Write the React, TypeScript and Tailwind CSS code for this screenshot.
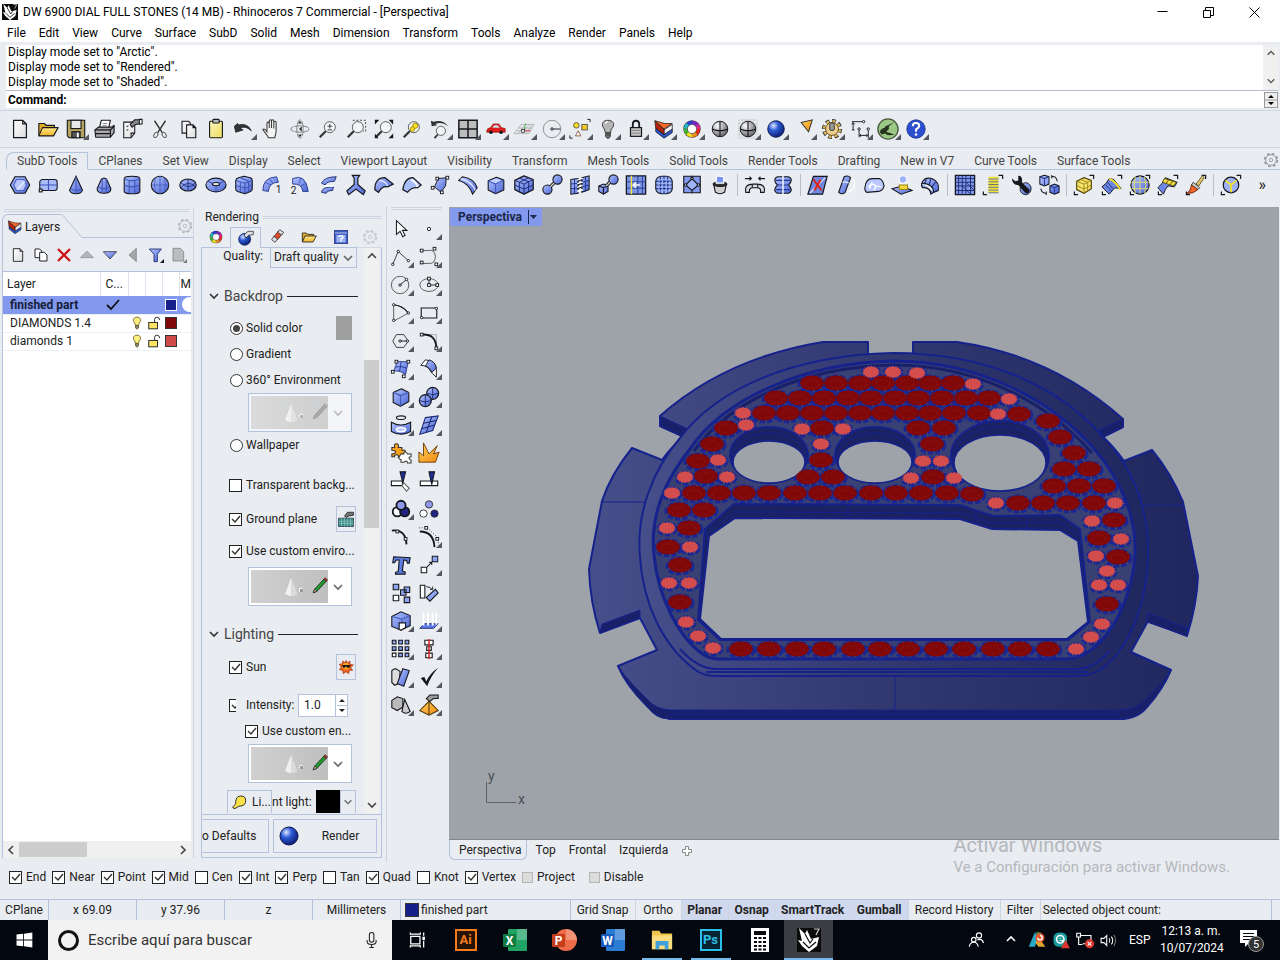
import { useState } from "react";
import type { ReactNode } from "react";
import { clsx } from "clsx";

/* ---------- icon artwork, all on a 24x24 grid ---------- */

const INK = "#15171c";
const B = "url(#blue)";

function Grip({ x, y }: { x: number; y: number }) {
  return <rect x={x - 1.5} y={y - 1.5} width="3" height="3" fill="#fff" stroke={INK} />;
}

function Dot({ x, y }: { x: number; y: number }) {
  return <circle cx={x} cy={y} r="1.3" fill="#fff" stroke={INK} />;
}

function Wheel() {
  const colors = ["#e8261c", "#f08c1a", "#f2e31f", "#3fb52c", "#22b8c9", "#2a3fd6", "#7a25c9", "#e0249a"];
  return (
    <g>
      <circle cx="12" cy="12" r="9.5" fill="#444" />
      {colors.map((c, i) => (
        <circle key={c} cx="12" cy="12" r="7" fill="none" stroke={c} strokeWidth="4" pathLength="16" strokeDasharray="2 14" strokeDashoffset={-i * 2} />
      ))}
      <circle cx="12" cy="12" r="5" fill="#fff" stroke="#444" strokeWidth="0.7" />
    </g>
  );
}

const corners = <path d="M18 1.5h4.500v4M1.500 19v3.500h4" fill="none" stroke={INK} strokeWidth="1.300" />;
const sphere = (
  <g fill="url(#steel)" stroke={INK}>
    <circle cx="12" cy="12" r="8.500" />
    <path d="M12 3.500v17M3.500 12q8.500 4 17 0" fill="none" strokeWidth="1.200" />
  </g>
);
const magnifier = (
  <g fill="none" stroke="#333">
    <circle cx="14" cy="10" r="6" fill="#f3f5f8" stroke="#555" />
    <path d="M9.500 14.500L3 21" strokeWidth="2.400" />
  </g>
);

const ICONS: Record<string, ReactNode> = {
  new: <path d="M5 2.500h10l4 4v15H5zM15 2.500v4h4" fill="url(#paper)" stroke={INK} strokeWidth="1.300" />,
  open: (
    <g stroke={INK} strokeWidth="1.200" strokeLinejoin="round">
      <path d="M2 19V6h6l2 2h9v3" fill="#e0a92c" />
      <path d="M2 19.500l4-9h17l-5 9z" fill="url(#gold)" />
    </g>
  ),
  save: (
    <g stroke={INK} strokeWidth="1.200">
      <path d="M2.500 2.500h19v19h-17l-2-2z" fill="#b3a45e" />
      <rect x="6.500" y="2.500" width="11" height="9" fill="#e9e9e9" />
      <rect x="7.500" y="15" width="9" height="6.500" fill="#555" />
      <path d="M14 16v5" stroke="#fff" strokeWidth="2" />
    </g>
  ),
  print: (
    <g stroke={INK} strokeWidth="1.200" strokeLinejoin="round">
      <path d="M7 11l2-8.500h10l-2 8.500z" fill="#fff" />
      <path d="M2 13l4-3h14l3-2v8l-4 5H3z" fill="#a9a9a9" />
      <path d="M2 13h17l4-4M3 17h16M19 13v8" fill="none" />
      <path d="M10.500 6h5M10 8.500h5" stroke="#888" />
    </g>
  ),
  props: (
    <g stroke={INK} strokeWidth="1.100">
      <path d="M3 4.500h12v12l-4 5H3z" fill="url(#paper)" />
      <path d="M15 16.500h-4v5M6 9h2M6 13h2" fill="none" />
      <path d="M10 7l5-5h7v4l-6 1-4 3z" fill="#888" />
      <path d="M20 1.500v5h3v-5z" fill="#fff" />
    </g>
  ),
  cut: (
    <g fill="none" stroke="#333">
      <path d="M6 3l8.500 13M18 3L9.500 16" strokeWidth="1.500" />
      <ellipse cx="7.500" cy="18.500" rx="2" ry="3" transform="rotate(30 7.500 18.500)" stroke="#555" />
      <ellipse cx="16.500" cy="18.500" rx="2" ry="3" transform="rotate(-30 16.500 18.500)" stroke="#555" />
    </g>
  ),
  copy: (
    <g fill="url(#paper)" stroke={INK} strokeWidth="1.200">
      <path d="M5.500 3.500h7l2 2v11h-9z" />
      <path d="M10.500 7.500h7l3 3v11h-10zM17.500 7.500v3h3" />
    </g>
  ),
  paste: (
    <g stroke={INK} strokeWidth="1.200">
      <rect x="5" y="3.500" width="14" height="18" rx="1" fill="url(#yellow)" />
      <rect x="8.500" y="1.500" width="7" height="4" rx="1" fill="#bbb" />
    </g>
  ),
  undo: <path d="M1.500 9l1.500 6.500 8-2.500-3-1.500q5-4 12 2.500-4-9-14-6.500l-1-1.500z" fill="#333" stroke={INK} strokeWidth="0.800" />,
  pan: (
    <path
      d="M8 21.500c-1-4-5-6-6-9 1.500-1.500 3 .5 4.500 2.500V6c0-2 2.500-2 2.500 0v5V3.500c0-2 2.500-2 2.500 0V11 3.500c0-2 2.500-2 2.500 0V11.500 5c0-2 2.500-2 2.500 0v9c0 3-1 5-1.500 7.500z"
      fill="#f4f4f4"
      stroke="#333"
      strokeWidth="1.100"
    />
  ),
  rotate: (
    <g fill="none" stroke="#777">
      <ellipse cx="12" cy="12" rx="10" ry="3.500" strokeDasharray="8 1" />
      <ellipse cx="12" cy="12" rx="3.500" ry="10" strokeDasharray="8 1" />
      <path d="M14 9l-3 3 3 3zM10 6l2-3 2 3zM10 18l2 3 2-3z" fill="#333" stroke="none" />
    </g>
  ),
  zoom: <g>{magnifier}<path d="M11.500 9h5M14 6.500v5M11.500 13h5" stroke="#333" /></g>,
  zoomWin: <g>{magnifier}<path d="M8.500 2.500h14v12h-3" fill="none" stroke="#333" strokeDasharray="2 2" /></g>,
  zoomExt: (
    <g>
      {magnifier}
      <path d="M2 7V2h5zM17 2h5v5zM22 17v5h-5zM2 17v5h4z" fill={INK} />
    </g>
  ),
  zoomSel: (
    <g>
      {magnifier}
      <circle cx="12.500" cy="12" r="2.500" fill="#f6dc22" stroke="#a88d00" />
      <circle cx="15.500" cy="8.500" r="2.800" fill="#f6dc22" stroke="#a88d00" />
    </g>
  ),
  undoView: (
    <g>
      <circle cx="13" cy="14" r="5" fill="#f3f5f8" stroke="#555" />
      <path d="M9.500 18L6 22" stroke="#333" strokeWidth="2" />
      <path d="M2 3l1 6 6-1-2-1.500q7-3 14 2.500Q15 1 5 4z" fill="#333" />
    </g>
  ),
  fourView: <path d="M2 2.500h20v19H2zM12 2.500v19M2 12h20" fill="#bdbdbd" stroke={INK} strokeWidth="1.600" />,
  car: (
    <g>
      <path d="M2 14q0-3 4-3.500l3-4h6l3 4 4 1v4H2z" fill="#df1f1b" stroke="#8b0d0a" strokeWidth="0.700" />
      <path d="M8 10.500l2-2.500h4l2 2.500z" fill="#cfe2ea" />
      <circle cx="6.500" cy="15.500" r="2" fill={INK} />
      <circle cx="17.500" cy="15.500" r="2" fill={INK} />
    </g>
  ),
  cplane: (
    <g fill="none" stroke="#a5a5a5" strokeWidth="0.800">
      <path d="M1 17l8-10h14l-6 10zM4 14h15M6.500 11h14M5.500 17l8-10M10 17l8-10M14 17l7-10" />
      <path d="M10 14h9" stroke="#c22" />
      <path d="M12 13l2-7" stroke="#2a2" />
      <Grip x={11} y={14} />
    </g>
  ),
  circle: (
    <g>
      <circle cx="12" cy="12" r="9.500" fill="none" stroke="#8b8b8b" />
      <path d="M12 12h9" stroke={INK} />
      <Dot x={12} y={12} />
    </g>
  ),
  selObj: (
    <g strokeWidth="1">
      <path d="M20 1.500h3v3M1 19v3h3" fill="none" stroke={INK} />
      <circle cx="8" cy="8" r="3" fill="#f6dc22" stroke="#555" />
      <rect x="14" y="7" width="6" height="6" fill="#f6c922" stroke="#555" />
      <path d="M10 14l3 5.500H7z" fill="#fff" stroke="#8a5a3a" />
    </g>
  ),
  bulb: (
    <g stroke="#333">
      <path d="M9 16q0-3-2-5.500C4 6 7 2.500 12 2.500s8 3.500 5 8c-2 2.500-2 2.500-2 5.500z" fill="#b5b5b5" />
      <path d="M9.500 16.500h5v4l-1.500 1.500h-2l-1.500-1.500zM9.500 18.500h5" fill="#777" />
      <path d="M9 6q1-2 3-2" fill="none" stroke="#fff" strokeWidth="1.500" />
    </g>
  ),
  lock: (
    <g stroke={INK}>
      <path d="M8.500 11V7q0-4 3.500-4t3.500 4v4" fill="none" strokeWidth="2" />
      <rect x="6" y="10.500" width="12" height="9.500" fill="#c9c9c9" strokeWidth="1.300" />
      <path d="M7 13.500h10M7 16.500h10" stroke="#777" />
    </g>
  ),
  layers: (
    <g stroke={INK} strokeWidth="0.800" strokeLinejoin="round">
      <path d="M3 11l9 7 9-6v4l-9 6-9-7z" fill="#2c55cc" />
      <path d="M12 13l9-6v5l-9 6z" fill="#f4f4f4" />
      <path d="M2 3l10 9v6L3 11z" fill="#b8230e" />
      <path d="M2 3l11 3h8l-9 6z" fill="#fa6a2c" />
    </g>
  ),
  wheel: <Wheel />,
  shaded: sphere,
  shadedGrid: (
    <g>
      <path d="M2 2h20v20H2zM2 6h20M2 10h20M2 14h20M2 18h20M6 2v20M10 2v20M14 2v20M18 2v20" fill="none" stroke="#aaa" strokeWidth="0.800" strokeDasharray="1 1" />
      {sphere}
    </g>
  ),
  rendered: <circle cx="12" cy="12" r="9" fill="url(#ball)" stroke="#0a164f" />,
  cone: <path d="M9 5l12-3-4 13z" fill="url(#orange)" stroke="#333" strokeWidth="1.100" />,
  gear: (
    <g>
      <circle cx="12" cy="12" r="8.500" fill="none" stroke="#333" strokeWidth="5" pathLength="32" strokeDasharray="2.400 1.600" />
      <circle cx="12" cy="12" r="8" fill="none" stroke="#d8b45b" strokeWidth="4" pathLength="32" strokeDasharray="1.800 2.200" strokeDashoffset="-0.300" />
      <circle cx="12" cy="12" r="7" fill="#ecd08a" stroke="#5e4718" />
      <rect x="9.500" y="5.500" width="5" height="8" rx="1.500" fill="#999" stroke="#333" />
    </g>
  ),
  dims: (
    <g fill="none" stroke={INK}>
      <path d="M3 4h12M3 13h3M4.500 5v8M11 13v8M21 13v9M12 19h8" />
      <path d="M3 7l1.500-2L6 7M13 17.500L11.500 19l1.500 1.500M19 17.500l1.500 1.500-1.500 1.500" />
      <Dot x={16} y={4} />
      <Dot x={11} y={12} />
      <Dot x={21} y={12} />
    </g>
  ),
  hopper: (
    <g>
      <circle cx="12" cy="12" r="11" fill="#9cc885" stroke="#4a5c40" strokeWidth="1.500" />
      <path d="M3 15q2-4 5-4 1-3 4-3l7-4-6 5 0 3-3 3 9 3q-8 2-10-1l-4 1z" fill="#27331f" />
    </g>
  ),
  help: (
    <g>
      <circle cx="12" cy="12" r="10" fill="#2b4fd0" stroke="#1b3494" />
      <path d="M8.500 9q0-3.500 3.500-3.500t3.500 3q0 2-3.500 4V15" fill="none" stroke="#fff" strokeWidth="2.200" />
      <circle cx="12" cy="18" r="1.400" fill="#fff" />
    </g>
  ),

  /* SubD toolbar */
  subHex: (
    <g stroke={INK} strokeWidth="1.300" fill={B}>
      <path d="M6.500 3h11l5 9-5 9h-11l-5-9z" />
      <path d="M8 6h8l3 6-3 6H8l-3-6z" fill="#b6c6fb" stroke="#4c64c4" />
      <path d="M9 17l8-9" stroke="#dfe7ff" strokeWidth="2" />
    </g>
  ),
  subPlane: (
    <g stroke={INK} strokeWidth="1.200" fill="#a9bcfa">
      <rect x="3" y="6" width="19" height="12" rx="3" />
      <path d="M12.500 6v12M3 12h19" stroke="#3a51b8" />
      <Grip x={4} y={18} />
    </g>
  ),
  subCone: (
    <g stroke={INK} strokeWidth="1.200">
      <path d="M12 2.500l7 15q-1 4-7 4t-7-4z" fill={B} />
      <path d="M12 3v18M6 16q6 4 12 0" fill="none" stroke="#4058b8" />
    </g>
  ),
  subTcone: (
    <g stroke={INK} strokeWidth="1.200">
      <path d="M9 6q3-3 6 0l4.500 10q0 5-7.500 5t-7.500-5z" fill={B} />
      <path d="M10 5v15M14.500 5v15M6 14q6 4 12 0" fill="none" stroke="#4058b8" />
    </g>
  ),
  subCyl: (
    <g stroke={INK} strokeWidth="1.200">
      <path d="M3.500 5q0-2.500 8.500-2.500T20.500 5v14q0 2.500-8.500 2.500T3.500 19z" fill={B} />
      <path d="M3.500 5q8 5 17 0M3.500 12q8 4 17 0M9 7v14M15 7v14" fill="none" stroke="#4058b8" />
    </g>
  ),
  subSphere: (
    <g stroke={INK} strokeWidth="1.200">
      <circle cx="12" cy="12" r="9.500" fill={B} />
      <path d="M12 2.500v19M2.500 12h19M7 4q-2 8 0 16M17 4q2 8 0 16" fill="none" stroke="#4058b8" strokeWidth="0.800" />
    </g>
  ),
  subEllip: (
    <g stroke={INK} strokeWidth="1.200">
      <ellipse cx="12" cy="12" rx="9" ry="6.500" fill={B} />
      <path d="M4 9q8 9 16 1M4 15q8-9 16-1M12 5.500v13" fill="none" stroke="#1c2a70" strokeWidth="0.900" />
    </g>
  ),
  subTorus: (
    <g stroke={INK} strokeWidth="1.200">
      <ellipse cx="12" cy="12" rx="11" ry="7.500" fill={B} />
      <ellipse cx="12" cy="11" rx="4" ry="1.800" fill="#e9ecf0" />
      <path d="M12 13v6M3 8l5 2M21 8l-5 2" stroke="#4058b8" />
    </g>
  ),
  subBox: (
    <g stroke={INK} strokeWidth="1.200" strokeLinejoin="round">
      <path d="M3 7q0-2 3-3l6-1.500L19 4q2 1 2 3v9q0 2-2 3l-6 2.500L5 19q-2-1-2-3z" fill={B} />
      <path d="M3 7l10 3 8-3M13 10v11M8 8.500v11M3 12.500l10 3 8-4M17 8.500v11M8 4l9 4" fill="none" stroke="#4058b8" />
    </g>
  ),
  crease1: (
    <g>
      <path d="M2 18q0-14 15-15l2 6Q9 9 8 19z" fill={B} stroke="#26398f" />
      <path d="M4 9l7 3M9 5l4 5" stroke="#4058b8" fill="none" />
      <text x="16" y="21" fontSize="11" fill={INK}>1</text>
    </g>
  ),
  crease2: (
    <g>
      <path d="M4 5q14-6 17 14l-6 0Q14 10 4 11z" fill={B} stroke="#26398f" />
      <path d="M13 4l-2 6M19 10l-6 3" stroke="#4058b8" />
      <text x="2" y="22" fontSize="11" fill={INK}>2</text>
    </g>
  ),
  bridge: (
    <g fill={B} stroke="#1c2a70">
      <path d="M5 10q3-7 16-7l-2 5Q10 8 9 12z" />
      <path d="M5 20q0-6 13-6l-1 4Q11 18 10 21z" />
      <path d="M8 13h10" stroke="#fff" strokeWidth="2" />
    </g>
  ),
  branch: <path d="M8 1.500h8l-2 3v7l8 7-2 4-8-6-8 6-2-4 8-7v-7z" fill={B} stroke={INK} strokeWidth="1.300" />,
  bend1: (
    <g stroke={INK} strokeWidth="1.300">
      <path d="M2 17Q2 4 13 4l9 7-6 3Q10 13 6 20z" fill={B} />
      <path d="M7 7q7 1 9 6" fill="none" stroke="#e5ebff" />
    </g>
  ),
  bend2: (
    <g stroke={INK} strokeWidth="1.300">
      <path d="M2 17Q4 4 13 4l9 8-4 3Q12 14 7 20z" fill="#a9bcfa" />
      <path d="M11 6q6 3 7 8" fill="none" stroke="#fff" strokeWidth="2" />
    </g>
  ),
  patch: (
    <g stroke={INK}>
      <path d="M6 14L10 5l9-1-1 9-5 7z" fill={B} />
      <Grip x={9} y={5} />
      <Grip x={20} y={4} />
      <Grip x={4} y={15} />
      <Grip x={14} y={20} />
    </g>
  ),
  slide: (
    <g stroke={INK} strokeWidth="1.200">
      <path d="M2 7l4-4q13 2 16 12l-5 7Q13 10 2 7z" fill={B} />
      <path d="M4 5q12 3 16 13" fill="none" stroke="#dfe6ff" strokeWidth="1.500" />
    </g>
  ),
  cube: (
    <g stroke={INK} strokeWidth="1.200" strokeLinejoin="round">
      <path d="M3.500 7.500l9-4 8 3v11l-9 4-8-4z" fill={B} />
      <path d="M3.500 7.500l8 3.500 9-4.500M11.500 11v10.500" fill="none" stroke="#4058b8" />
      <path d="M5 7.500l7-3 6 2.500-6.500 3z" fill="#c3d0ff" stroke="none" />
    </g>
  ),
  cubes: (
    <g stroke={INK} strokeWidth="1.400" strokeLinejoin="round">
      <path d="M2 7l10-5 10 4v11l-10 5-10-5z" fill={B} />
      <path d="M2 7l10 4 10-5M12 11v11M7 9v11M17 8.500v11M2 12l10 4.500L22 12M7 4.500l10 4M17 4L7 9" fill="none" stroke="#1c2a70" strokeWidth="1" />
    </g>
  ),
  joinBall: (
    <g stroke={INK} strokeWidth="1.200">
      <circle cx="7" cy="17" r="5" fill={B} />
      <circle cx="18" cy="6" r="5" fill={B} />
      <path d="M10 14l4-4" stroke="#111" strokeWidth="3.500" />
      <path d="M10 14l4-4" stroke="#ccc" strokeWidth="1.600" />
    </g>
  ),
  stitch: (
    <g stroke={INK} strokeWidth="1.100">
      <path d="M2 6l8-1v16l-8 1zM14 4l8-2v15l-8 3z" fill={B} />
      <path d="M2 11l8-1M2 16l8-1M14 9l8-2M14 14l8-2M6 5v16M18 3v16" stroke="#26398f" />
      <path d="M9 7l6-2M9 11l6-2M9 15l6-2M9 19l6-2" stroke="#fff" strokeWidth="2" />
      <path d="M9 8l6-2M9 12l6-2M9 16l6-2" />
    </g>
  ),
  joinBox: (
    <g stroke={INK} strokeWidth="1.200">
      <path d="M2 13l5-2 5 2v6l-5 3-5-3z" fill={B} />
      <path d="M2 13l5 2 5-2M7 15v7" fill="none" />
      <circle cx="18" cy="6" r="5" fill={B} />
      <path d="M10 13l4-4" stroke="#111" strokeWidth="3.500" />
      <path d="M10 13l4-4" stroke="#ccc" strokeWidth="1.600" />
    </g>
  ),
  insert: (
    <g>
      <path d="M1.500 2h21v20h-21z" fill="#7d95e6" stroke={INK} strokeWidth="1.400" />
      <path d="M1.500 8.500h21M1.500 15.500h21M14 2v20M19 2v20" stroke="#26398f" />
      <path d="M7 2v20" stroke="#f4e83a" strokeWidth="1.500" />
      <path d="M16 12H9M12 9l-3 3 3 3" fill="none" stroke="#fff" strokeWidth="1.600" />
    </g>
  ),
  netRound: (
    <g stroke={INK} strokeWidth="1.200">
      <rect x="3" y="2.500" width="18" height="19" rx="6" fill="#9db2f7" />
      <path d="M8 3v18M16 3v18M12 2.500v19M3 8h18M3 16h18M3 12h18" stroke="#26398f" strokeDasharray="3 1" />
    </g>
  ),
  diamondNet: (
    <g stroke={INK} strokeWidth="1.200">
      <path d="M3 2.500h18v18H3z" fill="#8299ed" />
      <path d="M12 5l7 7-7 6-7-6zM12 2v3M12 18v3M3 12h2M19 12h2" fill="#9fb3f6" />
      <Dot x={12} y={5} />
      <Dot x={5} y={12} />
      <Dot x={19} y={12} />
    </g>
  ),
  bucket: (
    <g stroke={INK} strokeWidth="1.200">
      <path d="M5 11l2 9q5 3 10 0l2-9z" fill="#d0d0d0" />
      <ellipse cx="12" cy="11" rx="7.500" ry="2.500" fill="#333" />
      <path d="M8 2l8 1v7H8z" fill="#7a93f0" stroke="#fff" />
    </g>
  ),
  spread: (
    <g stroke={INK} strokeWidth="1.200">
      <path d="M1 5h7M16 5h7M6 3l2 2-2 2M18 3l-2 2 2 2" fill="none" />
      <path d="M2 20q-2-9 8-9h4q10 0 8 9h-4q1-5-4-5h-4q-5 0-4 5z" fill="#d7dadf" />
      <path d="M9 11v4M15 11v4" />
    </g>
  ),
  symmetry: (
    <g stroke={INK} strokeWidth="1.200">
      <path d="M6 3h12q3 1 3 4 0 2-3 5 3 3 3 5 0 3-3 4H6q-3-1-3-4 0-2 3-5-3-3-3-5 0-3 3-4z" fill={B} />
      <path d="M4 7h16M5 12h14M4 17h16" stroke="#26398f" />
      <path d="M12 1v22" stroke="#fff" strokeWidth="1.500" />
    </g>
  ),
  noPlane: (
    <g>
      <path d="M1 22L7 2.500h15L17 22z" fill="#6e87dc" stroke={INK} strokeWidth="1.300" />
      <path d="M3 21L20 4" stroke="#dfe6ff" strokeWidth="1.200" />
      <path d="M7 6l9 12M15 6L8 18" stroke="#e0201b" strokeWidth="2.200" />
    </g>
  ),
  eraser: (
    <g stroke={INK} strokeWidth="1.200">
      <path d="M10 3q4-2 7 1l-6 16q-3 3-7 0z" fill={B} />
      <path d="M8 9q4-1 7 1" fill="none" stroke="#fff" />
      <path d="M20 6q3 4 0 9-2 4-5 5" fill="none" stroke="#fff" strokeWidth="1.500" />
    </g>
  ),
  shell: (
    <g stroke={INK} strokeWidth="1.200">
      <path d="M2 15Q3 5 10 5h8q4 2 5 8-1 5-6 6l-13 1q-2-1-2-5z" fill="#b9c8ff" />
      <path d="M6 14q4-5 8-1l6 1M14 13l-2 5M10 9l-3 7" fill="none" stroke="#fff" strokeWidth="1.500" />
    </g>
  ),
  lowPoly: (
    <g stroke={INK} strokeWidth="1.100">
      <path d="M1 16l11-3 11 5-12 4z" fill={B} />
      <path d="M9 12h9v5H9z" fill="#f3d53c" stroke="#9b8312" />
      <circle cx="13" cy="6" r="4" fill="#9db2f7" stroke="#fff" />
    </g>
  ),
  ribs: (
    <g fill={B} stroke={INK} strokeWidth="1.200">
      <path d="M3 10Q6 3 14 5q9 4 7 13l-5 2Q16 11 3 10z" />
      <path d="M3 10q-1 3 1 5 8-1 9 7l3-2" />
      <path d="M8 6l-2 5M13 5l-2 7M18 9l-4 5" stroke="#1c2a70" />
    </g>
  ),
  mesh: (
    <g>
      <path d="M1.500 1.500h21v21h-21z" fill="#7f98ea" stroke={INK} strokeWidth="1.400" />
      <path d="M5 1.500v21M9 1.500v21M13 1.500v21M1.500 5h21M1.500 9h21M1.500 13h21M1.500 18h21M18 1.500v21M13 9l9.500 9M9 13l9 9" fill="none" stroke="#1c2a70" />
    </g>
  ),
  list: (
    <g>
      {corners}
      <path d="M7 4h11M7 7h11M7 10h11M7 13h11M7 16h11M7 19h11" stroke="#f0e22e" strokeWidth="2" />
      <path d="M7 5.500h11M7 8.500h11M7 11.500h11M7 14.500h11M7 17.500h11M7 20.500h11" stroke="#555" strokeWidth="0.900" />
    </g>
  ),
  wrench: (
    <g>
      <ellipse cx="17" cy="16" rx="6" ry="6.500" fill={B} stroke={INK} />
      <path d="M2 5l4 3 3-1V2q5 0 4 7l8 8q1 3-2 4-2 0-3-1l-7-8Q3 13 2 5z" fill={INK} />
    </g>
  ),
  swap: (
    <g stroke={INK} strokeWidth="1.100">
      <path d="M2 3l5-1.500L12 3v8l-5 2-5-2zM13 13l5-2 5 2v7l-5 2-5-2z" fill={B} />
      <path d="M2 3l5 2 5-2M7 5v8M13 13l5 2 5-2M18 15v7" fill="none" stroke="#26398f" />
      <path d="M15 3q5-1 6 5M9 21q-5 0-6-5M15 1v4M9 19v4" fill="none" />
    </g>
  ),
  boxSel: (
    <g>
      {corners}
      <path d="M4 8l8-4 8 3v9l-8 5-8-4z" fill="#f7e36a" stroke="#4d3f08" strokeWidth="1.200" />
      <path d="M4 8l8 3 8-4M12 11v10M8 6l8 3v10M4 12.500l8 4 8-4.500" fill="none" stroke="#9a8418" />
    </g>
  ),
  roofSel: (
    <g>
      {corners}
      <path d="M1 14Q6 11 9 5l5 1 8 10-7-1-6 7z" fill="#6e87e6" stroke={INK} />
      <path d="M9 5q7 3 12 12" fill="none" stroke="#f0dd2a" strokeWidth="2.200" />
      <path d="M5 12l7 7M7 9l6 7" stroke="#1c2a70" />
    </g>
  ),
  sphereSel: (
    <g>
      {corners}
      <circle cx="12" cy="12" r="10" fill={B} stroke={INK} strokeWidth="1.200" />
      <path d="M2.500 9h19M2.500 16h19M12 2v20M7 3q-3 9 0 18M17 3q3 9 0 18" fill="none" stroke="#e9de62" />
    </g>
  ),
  faceSel: (
    <g>
      {corners}
      <path d="M1 15Q6 11 9 4l13 5-3 5-7-1q-3 3-5 9z" fill="#6e87e6" stroke={INK} />
      <path d="M8 5l13 4-3 4-12-4zM13 6l-3 4M17 8l-3 4" fill="#f4e03c" stroke="#5d5008" />
    </g>
  ),
  brush: (
    <g>
      {corners}
      <path d="M12 11l7-9 2 2-6 9z" fill="#e6c878" stroke="#5b4a1c" />
      <path d="M9 9l7 6-2 2-7-5z" fill="#ccc" stroke="#333" />
      <path d="M7 12l7 5q-5 5-12 4 4-2 5-9z" fill="#f1672a" stroke="#6a2409" />
    </g>
  ),
  valence: (
    <g>
      {corners}
      <circle cx="12" cy="12" r="8.500" fill="#9db2f7" stroke={INK} strokeWidth="1.300" />
      <path d="M12 20v-8L6 7M12 12l6-5" fill="none" stroke="#f0e22e" strokeWidth="2" />
    </g>
  ),

  /* side toolbar */
  arrow: <path d="M7 3v15l4-3.500 3 6 2.500-1.500-3-5.500h5z" fill="#fff" stroke={INK} strokeWidth="1.100" />,
  point: <circle cx="12" cy="12" r="1.800" fill="#fff" stroke={INK} />,
  polyline: (
    <g stroke="#333">
      <path d="M3 20L9 6l11 10" fill="none" />
      <Dot x={3} y={20} />
      <Dot x={9} y={6} />
      <Dot x={20} y={16} />
    </g>
  ),
  curve: (
    <g>
      <path d="M4 5h6q8-2 9 6 0 9-8 8H4" fill="none" stroke="#555" />
      <Grip x={4} y={5} />
      <Grip x={18} y={3} />
      <Grip x={4} y={18} />
      <Grip x={20} y={20} />
    </g>
  ),
  circ: (
    <g>
      <circle cx="11" cy="12" r="9.500" fill="none" stroke="#555" />
      <path d="M11 12l7-6" stroke={INK} />
      <Dot x={11} y={12} />
      <Dot x={18} y={6} />
    </g>
  ),
  ellipse: (
    <g>
      <ellipse cx="12" cy="12" rx="10" ry="7" fill="none" stroke="#555" />
      <path d="M12 5v7h9" fill="none" stroke={INK} />
      <Grip x={12} y={5} />
      <Grip x={12} y={12} />
      <Grip x={21} y={12} />
    </g>
  ),
  arc: (
    <g>
      <path d="M4 21V3q10 1 16 9z" fill="none" stroke="#555" />
      <path d="M4 3q10 1 16 9" fill="none" stroke={INK} strokeWidth="1.300" />
      <Dot x={4} y={3} />
      <Dot x={4} y={20} />
      <Dot x={20} y={12} />
    </g>
  ),
  rect: (
    <g>
      <path d="M3.500 6.500h17v11h-17z" fill="none" stroke={INK} strokeWidth="1.200" />
      <Dot x={4} y={17} />
      <Dot x={20} y={7} />
    </g>
  ),
  polygon: (
    <g>
      <path d="M7 5h8l5 7-5 7H7l-4-7z" fill="none" stroke="#333" />
      <path d="M11 12h8" stroke={INK} />
      <Dot x={11} y={12} />
      <Dot x={19} y={12} />
    </g>
  ),
  fillet: (
    <g>
      <path d="M4 5h16v14" fill="none" stroke="#aaa" />
      <path d="M4 5q16-1 16 15" fill="none" stroke={INK} strokeWidth="2" />
      <Grip x={4} y={5} />
      <Grip x={20} y={20} />
    </g>
  ),
  srf: (
    <g>
      <path d="M7 4h13q-2 8-3 14-6-5-13-4 3-4 3-10z" fill={B} stroke="#26398f" />
      <path d="M5 10q7-2 13 1M12 4q0 6-2 11" fill="none" stroke="#26398f" />
      <Grip x={7} y={4} />
      <Grip x={20} y={4} />
      <Grip x={3} y={15} />
      <Grip x={15} y={20} />
    </g>
  ),
  sweep: (
    <g stroke={INK}>
      <path d="M3 8l5-6q11 1 12 10v9l-6-6Q11 8 3 8z" fill="#fff" />
      <path d="M8 9l4-7q7 2 8 9l-5 5q-2-6-7-7z" fill={B} />
    </g>
  ),
  solidBox: (
    <g stroke={INK} strokeWidth="1.200" strokeLinejoin="round">
      <path d="M3.500 7l9-4 8 4v10l-9 5-8-4z" fill={B} />
      <path d="M3.500 7l8 3.500 9-3.500M11.500 10.500V22" fill="none" stroke="#4058b8" />
    </g>
  ),
  boolean: (
    <g stroke={INK} strokeWidth="1.300">
      <circle cx="16" cy="8" r="6.500" fill={B} />
      <circle cx="8" cy="16" r="6.500" fill={B} />
      <path d="M2 16q6 3 12 0M8 9.500v13M10 8q6 3 12 0M16 2v12" fill="none" stroke="#1c2a70" strokeWidth="1" />
    </g>
  ),
  project: (
    <g stroke={INK} strokeWidth="1.200">
      <ellipse cx="12" cy="4" rx="5" ry="2" fill="none" />
      <path d="M1.500 9q10 6 21 0v10q-10 6-21 0z" fill={B} />
      <ellipse cx="12" cy="17" rx="5" ry="2.300" fill="#b9c8ff" stroke="#fff" strokeWidth="1.600" />
    </g>
  ),
  meshTile: (
    <g stroke="#1c2a70" strokeWidth="1.200">
      <path d="M8 4l14-2-6 16-14 4z" fill={B} />
      <path d="M6 10l14-3M4 16l14-4M15 3L9 20" fill="none" />
    </g>
  ),
  puzzle: (
    <g stroke="#333" strokeWidth="1.100">
      <path d="M2 6h3q-1-4 2-4t2 4h4v3q4-1 4 2t-4 2v4H9q1-3-2-3t-2 2H2v-3q4 0 4-2t-4-2z" fill="#f5a21c" />
      <path d="M12 13h3q0-3 2-2t2 2h4v3q-3 0-2 2t2 2v3h-4q0-3-2-2t-2 1h-3v-3q-3 0-2-3z" fill="#fff" />
    </g>
  ),
  explode: <path d="M1 22V11l5 4V1l6 12 9-9-4 9 6-2-4 11z" fill="url(#orange)" stroke="#6c3a08" strokeWidth="1" />,
  trim: (
    <g stroke={INK} strokeWidth="1.200">
      <path d="M1.500 12h12v5h-12z" fill="#fff" />
      <path d="M15 14l6 6-3 3-5-6z" fill="#fff" stroke="#666" />
      <path d="M11 2h6l-3 12z" fill="#1f2f9c" />
    </g>
  ),
  split: (
    <g stroke={INK} strokeWidth="1.200">
      <path d="M2.500 12h19v5h-19z" fill="#fff" />
      <path d="M12 2h6l-3 14z" fill="#1f2f9c" />
    </g>
  ),
  group: (
    <g stroke={INK} strokeWidth="2">
      <circle cx="8" cy="15" r="5" fill="#fff" />
      <circle cx="16" cy="15" r="5" fill="#1f2580" />
      <circle cx="12" cy="8" r="5" fill="#8f97ea" />
    </g>
  ),
  ungroup: (
    <g stroke="#333">
      <circle cx="6" cy="17" r="4" fill="#fff" />
      <circle cx="18" cy="17" r="4" fill="#1f2580" />
      <circle cx="12" cy="7" r="4" fill="#8f97ea" />
    </g>
  ),
  ptsOn: (
    <g>
      <path d="M2 5q15-2 16 15" fill="none" stroke={INK} strokeWidth="2" />
      <Grip x={8} y={6} />
      <Grip x={17} y={14} />
    </g>
  ),
  ptsEdit: (
    <g>
      <path d="M2 6q15 0 16 17" fill="none" stroke={INK} strokeWidth="2" />
      <path d="M1 2h9l12 11v8" fill="none" stroke="#333" strokeDasharray="1 2" />
      <Grip x={9} y={2} />
      <Grip x={21} y={14} />
    </g>
  ),
  textTool: (
    <path d="M4 3l18 1-1 6h-2l-1-3-3-.500-1.500 12 3 1v2.500H6V20l3-1 1-12.500-3 0-2 3H3z" fill="#5f7be0" stroke={INK} strokeWidth="1.200" />
  ),
  move: (
    <g stroke={INK} strokeWidth="1.100">
      <path d="M3.500 14.500h6v6h-6z" fill="#fff" />
      <path d="M15.500 2.500h6v6h-6z" fill="#8fa5f3" />
      <path d="M10 14l5-5M12 9h3v3" fill="none" />
    </g>
  ),
  copyObj: (
    <g stroke={INK} strokeWidth="1.200" fill="#8fa5f3">
      <path d="M3.500 2.500h6v6h-6zM15.500 5.500h6v6h-6zM11.500 8.500h6v6h-6zM15.500 16.500h6v6h-6z" />
      <path d="M3.500 14.500h6v6h-6z" fill="#fff" />
    </g>
  ),
  rotateObj: (
    <g stroke={INK} strokeWidth="1.200">
      <path d="M2.500 3.500h5v14h-5z" fill="#fff" />
      <path d="M19 8l3 4-9 9-4-4z" fill="#8fa5f3" />
      <path d="M9 5q5 0 7 4M13 8h3V5" fill="none" strokeWidth="1" />
    </g>
  ),
  boxEdit: (
    <g stroke={INK} strokeWidth="1.200">
      <path d="M2 7l10-5 10 4v11l-10 5-10-4z" fill={B} />
      <path d="M2 7l11 3 9-4M13 10v4" fill="none" stroke="#4058b8" />
      <path d="M10 14h7v5l-5 3-2-1z" fill="#fff" />
    </g>
  ),
  projUp: (
    <g>
      <path d="M2 20l5-5h15l-5 5z" fill="#5f7bea" stroke="#1c2a70" />
      <path d="M6 17V3M11 17V3M16 17V3M20 16V3" stroke="#fff" strokeWidth="2" />
    </g>
  ),
  array: (
    <g stroke={INK} strokeWidth="1.200" fill="#8fa5f3">
      <path d="M2.500 2.500h4v4h-4zM9.500 2.500h4v4h-4zM16.500 2.500h4v4h-4zM2.500 9.500h4v4h-4zM9.500 9.500h4v4h-4zM16.500 9.500h4v4h-4zM9.500 16.500h4v4h-4zM16.500 16.500h4v4h-4z" />
      <path d="M2.500 16.500h4v4h-4z" fill="#fff" />
    </g>
  ),
  align: (
    <g stroke={INK} strokeWidth="1.200" fill="#fff">
      <path d="M7.500 2.500h9v5h-9zM9.500 9.500h5v4h-5zM8.500 16.500h7v5h-7z" />
      <path d="M12 1v22" stroke="#d42020" strokeWidth="1.600" />
    </g>
  ),
  flow: (
    <g stroke={INK} strokeWidth="1.200">
      <path d="M2 5q3-3 6-1l3 2-1 13-5 2-3-3z" fill="#ddd" />
      <path d="M14 3l7 2-6 17-7-3z" fill={B} />
    </g>
  ),
  check: <path d="M3 13l4-1 2 5Q13 8 22 2q-8 9-12 20z" fill={INK} />,
  solids: (
    <g stroke={INK} strokeWidth="1.200">
      <path d="M2 7l6-4 6 2v9l-6 4-6-3z" fill="#bbb" />
      <path d="M16 6l6 13q-5 4-9 0z" fill="#ccc" />
    </g>
  ),
  pyramid: (
    <g stroke="#4b3207" strokeWidth="1.100">
      <path d="M2 18L12 8l10 10-10 5z" fill="url(#orange)" />
      <path d="M12 8v15" />
      <path d="M9 5l4-4h9v4l-5 0-4 3z" fill="#999" stroke={INK} />
    </g>
  ),

  /* panels */
  cog: (
    <g fill="none" stroke="#8f959c" strokeWidth="1.300">
      <circle cx="12" cy="12" r="9.500" strokeWidth="2.500" strokeDasharray="4 3.460" />
      <circle cx="12" cy="12" r="8" />
      <circle cx="12" cy="12" r="2.500" />
    </g>
  ),
  pages: (
    <g fill="#fff" stroke={INK} strokeWidth="1.400">
      <path d="M3 3h7l3 3v10H3z" />
      <path d="M10 8h7l4 4v9H10z" />
    </g>
  ),
  del: <path d="M3 3l18 18M21 3L3 21" stroke="#cc1414" strokeWidth="3.500" />,
  up: <path d="M12 6l10 10H2z" fill="#b4b7ba" stroke="#8a8d90" />,
  down: <path d="M2 7h20L12 18z" fill={B} stroke={INK} />,
  left: <path d="M6 12L17 2v20z" fill="#a5a8ab" stroke="#777" />,
  funnel: (
    <g>
      <path d="M2 3h18l-6 8v11h-5V11z" fill={B} stroke="#1c2a70" strokeWidth="1.300" />
      <path d="M24 18v6h-6z" fill={INK} />
    </g>
  ),
  grayPage: (
    <g>
      <path d="M3 2h11l5 5v14H3z" fill="#b9bcc0" stroke="#888" strokeWidth="1.300" />
      <path d="M24 18v6h-6z" fill="#777" />
    </g>
  ),
  lightBulb: (
    <g stroke="#5b4a10" strokeWidth="1.300">
      <path d="M9 16q0-3-2-5.500C4 6 7 2 12 2s8 4 5 8.500c-2 2.500-2 2.500-2 5.500z" fill="#fdf07e" />
      <path d="M9.500 16.500h5v4l-2.500 2-2.500-2z" fill="#888" />
    </g>
  ),
  unlock: (
    <g stroke={INK} strokeWidth="1.500">
      <path d="M13 11V6q0-4 4-4t5 5" fill="none" />
      <rect x="3" y="11" width="15" height="11" fill="#fbe463" />
    </g>
  ),
  ballHand: (
    <g>
      <circle cx="10" cy="14" r="9" fill="url(#ball)" stroke="#0a164f" />
      <path d="M9 7l6-5h8v5l-7 1-4 4z" fill="#ddd" stroke={INK} />
    </g>
  ),
  tube: (
    <g stroke="#333" strokeWidth="1.200">
      <path d="M14 3l6 4-7 9-6-4z" fill="#e24a28" />
      <path d="M16 1l6 4-3 4-6-4zM7 11l6 4-4 5-5-4z" fill="#ddd" />
    </g>
  ),
  helpWin: (
    <g>
      <rect x="2" y="2" width="20" height="20" fill="#3d5bc8" stroke="#1c2a70" />
      <path d="M3 6h18" stroke="#fff" />
      <path d="M5 9h14v11H5z" fill="#9fb3f3" />
      <path d="M9 12q0-2 3-2t3 2-3 3v1M12 17v2" fill="none" stroke="#fff" strokeWidth="2" />
    </g>
  ),
  groundBtn: (
    <g>
      <path d="M2 11h20v11H2z" fill="#3f8f8a" stroke="#234" />
      <path d="M2 15h20M2 18h20M6 11v11M10 11v11M14 11v11M18 11v11" stroke="#9fd3ce" strokeWidth="0.700" />
      <path d="M10 8l4-5h8v4l-6 1-4 2z" fill="#777" stroke={INK} />
    </g>
  ),
  sun: (
    <g>
      <path d="M12 2l2 4 4-3 0 5 5 1-4 4 3 4-5 0-1 5-4-3-4 3-1-5-5-1 3-4-3-4 5-1 0-4 4 3z" fill="#f0641e" stroke="#9b2c08" />
      <circle cx="12" cy="11" r="5" fill="#f9a825" />
      <path d="M6 9h13l-2 4h-3l-2-2-2 2H8z" fill={INK} />
    </g>
  ),
  pencil: (
    <g>
      <path d="M3 21l2-5L17 3l3 3L8 19z" fill="#1f9a2c" stroke={INK} />
      <path d="M3 21l2-5 3 3z" fill="#f2d7a2" stroke={INK} />
      <path d="M17 3l2-2 3 3-2 2z" fill="#d43a2a" stroke={INK} />
    </g>
  ),
  pencilOff: (
    <g stroke="#666">
      <path d="M3 21l2-5L17 3l3 3L8 19z" fill="#8c8c8c" />
      <path d="M17 3l2-2 3 3-2 2z" fill="#aaa" />
    </g>
  ),
  lamp: <path d="M3 21q-1-2 2-4 3-2 2-6 1-8 8-8t7 7-7 8q-4 0-6 2-3 3-6 1z" fill="#fbe04a" stroke={INK} strokeWidth="1.300" />,
  rhino: (
    <g>
      <rect width="24" height="24" fill="#0b0b0b" />
      <path d="M2 0l6 6 2-4 4 9 8-2-2 9-8 6-7-6-4-6 4 1z" fill="#fff" />
      <path d="M8 6l5 9 3-4M6 14l6 6 7-6" fill="none" stroke="#0b0b0b" strokeWidth="1.200" />
      <path d="M17 1h5l-3 6" fill="none" stroke="#ccc" strokeWidth="1.200" />
    </g>
  ),

  /* Windows tray and taskbar */
  start: <path d="M3 5.500l8-1v7H3zM12 4.400L22 3v8.500H12zM3 12.500h8v7l-8-1zM12 12.500h10V21l-10-1.400z" fill="#fff" />,
  mic: (
    <g fill="none" stroke="#222" strokeWidth="1.400">
      <rect x="8.500" y="2" width="6" height="13" rx="3" />
      <path d="M5.500 12v2q0 4 6 4t6-4v-2M11.500 18v4M8.500 22h6" />
    </g>
  ),
  taskView: (
    <g fill="none" stroke="#fff" strokeWidth="1.500">
      <path d="M4.500 7.500h11v9h-11zM4 3v2h12V3M4 21v-2h12v2M20 3v4M20 13v8" />
      <path d="M20 8v4" strokeWidth="3" />
    </g>
  ),
  folder: (
    <g>
      <path d="M1 2h8l2 3h12v17H1z" fill="#f0c54b" />
      <path d="M1 7h22v15H1z" fill="#fbdd7f" />
      <path d="M5 22v-9h14v9h-4v-4H9v4z" fill="#3ea0dc" />
    </g>
  ),
  calc: (
    <g>
      <path d="M3 0h18v24H3z" fill="#fff" />
      <path d="M6 3h12v4H6z" fill="#05080f" />
      <path d="M6 10h3M10.500 10h3M15 10h3M6 14h3M10.500 14h3M15 14h3M6 18h3M10.500 18h3M15 18h3M6 21.500h3M10.500 21.500h3M15 21.500h3" stroke="#05080f" strokeWidth="1.800" />
    </g>
  ),
  people: (
    <g fill="none" stroke="#fff" strokeWidth="1.500">
      <circle cx="16" cy="6" r="3.500" />
      <circle cx="9" cy="11.500" r="3" />
      <path d="M3 21q1-6 6-6t6 6M14 12q6-3 8 4" />
    </g>
  ),
  update: (
    <g>
      <path d="M9 2L1 21h8L15 8z" fill="#2aa6c6" />
      <path d="M9 2h8l2 5z" fill="#69b64a" />
      <path d="M14 8l9 13h-9l-4-5z" fill="#e2a52b" />
      <circle cx="16" cy="9" r="6" fill="#e8572a" />
      <path d="M13 9a3 3 0 1 0 3-3" fill="none" stroke="#fff" strokeWidth="1.800" />
    </g>
  ),
  eset: (
    <g>
      <rect x="2" y="2" width="18" height="19" rx="7" fill="#189a9c" />
      <circle cx="11" cy="11" r="6" fill="#fff" />
      <path d="M8 11h6q0-3-3-3t-3 3 3 3h2" fill="none" stroke="#189a9c" strokeWidth="1.700" />
      <path d="M18 12l6 11H12z" fill="#e0342c" />
    </g>
  ),
  netErr: (
    <g fill="none" stroke="#fff" strokeWidth="1.500">
      <path d="M5 6h15v11H9M1 3h5v5H1zM3.500 8v10h5" />
      <circle cx="18" cy="17" r="6" fill="#e0342c" stroke="none" />
      <path d="M15.500 14.500l5 5M20.500 14.500l-5 5" />
    </g>
  ),
  volume: (
    <g fill="none" stroke="#fff" strokeWidth="1.500">
      <path d="M1.500 9h4l4-4v14l-4-4h-4z" />
      <path d="M13 9q2 3 0 6M16 6.500q4 5.500 0 11" />
      <path d="M19.500 4q5 8 0 16" stroke="#777" />
    </g>
  ),
};

function Icon({ name, className = "size-6" }: { name: string; className?: string }) {
  return (
    <svg viewBox="0 0 24 24" className={clsx("shrink-0", className)} aria-hidden="true">
      {ICONS[name]}
    </svg>
  );
}

function Chevron({ dir, className }: { dir: "up" | "down" | "left" | "right"; className?: string }) {
  const paths = { up: "M2 7l4-4 4 4", down: "M2 4l4 4 4-4", left: "M8 2L4 6l4 4", right: "M4 2l4 4-4 4" };
  return (
    <svg viewBox="0 0 12 12" className={clsx("size-3 shrink-0", className)} aria-hidden="true">
      <path d={paths[dir]} fill="none" stroke="currentColor" strokeWidth="1.6" />
    </svg>
  );
}

/* A name ending in * has a fly-out, shown as a corner triangle. */
function ToolButton({ name }: { name: string }) {
  const flyout = name.endsWith("*");
  const id = flyout ? name.slice(0, -1) : name;
  return (
    <button aria-label={id} className="w-7 h-7 shrink-0 grid place-items-center">
      <Icon name={id} className="size-[22px] col-start-1 row-start-1" />
      {flyout && (
        <svg viewBox="0 0 28 28" className="size-7 col-start-1 row-start-1" aria-hidden="true">
          <path d="M27 19v6h-6z" fill="#55585c" />
        </svg>
      )}
    </button>
  );
}

/* ---------- form controls ---------- */

function Check({ label, checked, disabled, className }: { label: string; checked?: boolean; disabled?: boolean; className?: string }) {
  return (
    <label className={clsx("flex items-center gap-1 whitespace-nowrap", className)}>
      <span className="grid place-items-center">
        <input
          type="checkbox"
          defaultChecked={checked}
          disabled={disabled}
          className="peer appearance-none col-start-1 row-start-1 size-[13px] border border-[#222] bg-white disabled:size-[11px] disabled:border-[#b5b5b5] disabled:bg-[#dcdcdc]"
        />
        <svg viewBox="0 0 13 13" className="hidden peer-checked:block col-start-1 row-start-1 size-[13px] pointer-events-none">
          <path d="M3 6l3 3 5-6" fill="none" stroke="#333" strokeWidth="1.4" />
        </svg>
      </span>
      {label}
    </label>
  );
}

function Radio({ label, checked }: { label: string; checked?: boolean }) {
  return (
    <label className="flex items-center gap-[3px] h-[26px] pl-7">
      <span className="grid place-items-center">
        <input type="radio" name="backdrop" defaultChecked={checked} className="peer appearance-none col-start-1 row-start-1 size-[13px] rounded-full border border-[#333] bg-white" />
        <span className="hidden peer-checked:block col-start-1 row-start-1 size-[7px] rounded-full bg-[#444] pointer-events-none" />
      </span>
      {label}
    </label>
  );
}

function SectionHead({ title }: { title: string }) {
  return (
    <div className="flex items-center h-7 pl-[6px] pr-[6px] text-[14px]">
      <Chevron dir="down" className="text-[#333]" />
      <h3 className="pl-[4px] pr-1 text-[#444]">{title}</h3>
      <div className="flex-1 h-px bg-[#222]" />
    </div>
  );
}

function EnvPicker({ disabled }: { disabled?: boolean }) {
  return (
    <button
      aria-label="Environment"
      disabled={disabled}
      className={clsx("ml-[46px] w-[104px] h-[39px] shrink-0 border border-[#b5c2de] p-[2px] flex items-center", disabled ? "bg-[#f3f5f8]" : "bg-white")}
    >
      <span className={clsx("w-[77px] h-[33px] bg-linear-to-r from-[#d0d0d0] to-[#bfbfbf] flex items-center justify-end", disabled && "opacity-70")}>
        <svg viewBox="0 0 50 33" className="w-[50px] h-[33px]">
          <path d="M13 8l6 16q-6 4-12 0z" fill="#f0f0f0" />
          <path d="M13 8l6 16q-3 2-6 2z" fill="#dadada" />
          <circle cx="23" cy="20" r="3" fill="#eee" stroke="#aaa" strokeWidth="0.600" />
          <path d="M22 19h3v3h-3z" fill="#999" />
          <g transform="translate(33 7) scale(.75)">{disabled ? ICONS.pencilOff : ICONS.pencil}</g>
        </svg>
      </span>
      <Chevron dir="down" className={clsx("ml-1", disabled ? "text-[#bbb]" : "text-[#666]")} />
    </button>
  );
}

/* ---------- toolbars ---------- */

const MENUS = ["File", "Edit", "View", "Curve", "Surface", "SubD", "Solid", "Mesh", "Dimension", "Transform", "Tools", "Analyze", "Render", "Panels", "Help"];

const MAIN_TOOLS = [
  "new", "open", "save*", "print", "props", "cut", "copy", "paste", "undo*", "pan", "rotate",
  "zoom", "zoomWin", "zoomExt", "zoomSel", "undoView*", "fourView*", "car*", "cplane*", "circle*", "selObj*", "bulb*",
  "lock*", "layers*", "wheel*", "shaded", "shadedGrid*", "rendered*", "cone*", "gear*", "dims*", "hopper*", "help*",
];

const TABS = [
  "SubD Tools", "CPlanes", "Set View", "Display", "Select", "Viewport Layout", "Visibility", "Transform",
  "Mesh Tools", "Solid Tools", "Render Tools", "Drafting", "New in V7", "Curve Tools", "Surface Tools",
];

const SUBD_GROUPS = [
  [
    "subHex", "subPlane", "subCone", "subTcone", "subCyl", "subSphere", "subEllip", "subTorus", "subBox", "crease1", "crease2", "bridge", "branch",
    "bend1", "bend2", "patch", "slide", "cube", "cubes", "joinBall", "stitch", "joinBox", "insert", "netRound", "diamondNet", "bucket",
  ],
  ["spread", "symmetry"],
  ["noPlane", "eraser", "shell", "lowPoly", "ribs"],
  ["mesh", "list", "wrench", "swap"],
  ["boxSel", "roofSel", "sphereSel", "faceSel", "brush"],
  ["valence"],
];

const SIDE_TOOLS = [
  "arrow", "point*", "polyline*", "curve*", "circ*", "ellipse*", "arc*", "rect*", "polygon*", "fillet*", "srf*", "sweep*",
  "solidBox*", "boolean*", "project*", "meshTile*", "puzzle", "explode", "trim", "split", "group*", "ungroup", "ptsOn", "ptsEdit*",
  "textTool", "move*", "copyObj", "rotateObj", "boxEdit*", "projUp*", "array*", "align*", "flow*", "check*", "solids*", "pyramid*",
];

function TitleBar() {
  return (
    <header className="bg-white">
      <div className="flex items-center h-6 pl-[2px]">
        <Icon name="rhino" className="size-4" />
        <h1 className="pl-[5px] flex-1 text-black">DW 6900 DIAL FULL STONES (14 MB) - Rhinoceros 7 Commercial - [Perspectiva]</h1>
        <div className="flex gap-7 pr-[17px]">
          {["M1 5h10", "M1 4h7v7H1zM3 4V1h8v8H8", "M1 1l10 10M11 1L1 11"].map((d, i) => (
            <button key={d} aria-label={["Minimize", "Restore", "Close"][i]} className="w-[18px] grid place-items-center">
              <svg viewBox="0 0 13 13" className="size-[13px]">
                <path d={d} fill="none" stroke="#000" transform="translate(.5 .5)" />
              </svg>
            </button>
          ))}
        </div>
      </div>
      <nav className="flex h-[18px] items-center gap-[13px] pl-[7px] text-black">
        {MENUS.map((m) => (
          <button key={m}>{m}</button>
        ))}
      </nav>
    </header>
  );
}

function CommandArea() {
  return (
    <section className="mt-[3px] ml-[6px] mr-[2px] bg-white text-black">
      <div className="flex border-b border-[#b3bbcc]">
        <div className="flex-1 leading-[15px] pl-[2px]">
          <p>Display mode set to "Arctic".</p>
          <p>Display mode set to "Rendered".</p>
          <p>Display mode set to "Shaded".</p>
        </div>
        <div className="w-[15px] bg-[#f0f0f0] flex flex-col justify-between items-center py-1 text-[#555]">
          <Chevron dir="up" className="size-[10px]" />
          <Chevron dir="down" className="size-[10px]" />
        </div>
      </div>
      <div className="flex h-[17px] items-center pl-[2px]">
        <label htmlFor="command" className="font-bold">Command:</label>
        <input id="command" className="flex-1 outline-none" />
        <button aria-label="History" className="w-[14px] h-4 border border-[#999] bg-[#eee] grid place-items-center">
          <svg viewBox="0 0 12 14" className="w-3 h-[14px]">
            <path d="M3 5h6L6 2zM3 9h6l-3 3z" fill="#000" />
            <path d="M0 7h12" stroke="#999" />
          </svg>
        </button>
      </div>
    </section>
  );
}

function TopToolbars() {
  const [tab, setTab] = useState(0);
  return (
    <>
      <div className="mt-[2px] border-y border-[#cdd5e3] h-[38px] flex items-center pl-[6px]">
        {MAIN_TOOLS.map((t) => (
          <ToolButton key={t} name={t} />
        ))}
      </div>
      <div className="mt-1 flex items-end h-[18px] pl-[6px]">
        {TABS.map((t, i) => (
          <button
            key={t}
            onClick={() => setTab(i)}
            className={clsx(
              "h-[18px] leading-[16px] px-[10px] border-b border-[#b5c2de] whitespace-nowrap text-[#444]",
              i === tab && "border-x border-t border-b-transparent rounded-tl-lg",
            )}
          >
            {t}
          </button>
        ))}
        <div className="flex-1 self-stretch border-b border-[#b5c2de] flex justify-end">
          <Icon name="cog" className="size-4 mr-[1px]" />
        </div>
      </div>
      <div className="flex items-center h-[30px] pl-[6px]">
        {SUBD_GROUPS.map((group, i) => (
          <div key={i} className="flex items-center">
            {i > 0 && <div className="w-px h-[22px] mx-[3px] bg-[#b9bdc4]" />}
            {group.map((t) => (
              <ToolButton key={t} name={t} />
            ))}
          </div>
        ))}
        <button className="ml-auto mr-[14px] text-[16px] text-[#222]">»</button>
      </div>
    </>
  );
}

/* ---------- layers panel ---------- */

const LAYERS = [
  { name: "finished part", color: "#16208a", current: true },
  { name: "DIAMONDS 1.4", color: "#7e0707", current: false },
  { name: "diamonds 1", color: "#cf4a4a", current: false },
];

function LayersPanel() {
  return (
    <section className="w-[194px] shrink-0 flex flex-col border-r border-[#cdd5e3] mr-[7px] mb-1">
      <div className="h-[3px] border-y border-[#cdd5e3] mt-[2px] mx-1" />
      <div className="flex items-end pt-[2px] pl-[2px]">
        <div className="flex items-center gap-[2px] w-[60px] h-6 pl-1 border-l border-t border-[#b5c2de] rounded-tl-md">
          <Icon name="layers" className="size-4" />
          Layers
        </div>
        <svg viewBox="0 0 20 24" className="w-5 h-6">
          <path d="M0 .5L20 23.500" stroke="#b5c2de" />
        </svg>
        <div className="flex-1 h-6 border-b border-[#b5c2de] flex justify-end items-center">
          <Icon name="cog" className="size-4 opacity-60" />
        </div>
      </div>
      <div className="ml-[2px] flex-1 flex flex-col border-l border-[#b5c2de] mr-[2px]">
        <div className="flex h-[33px] items-center gap-[7px] pl-[7px] overflow-hidden">
          {["new", "pages", "del", "up", "down", "left", "funnel", "grayPage"].map((n) => (
            <button key={n} aria-label={n} className="shrink-0">
              <Icon name={n} className="size-4" />
            </button>
          ))}
        </div>
        <div className="flex-1 bg-white border-t border-[#b5c2de] overflow-hidden">
          <table className="w-full table-fixed border-collapse text-left">
            <colgroup>
              <col className="w-[97px]" />
              <col className="w-7" />
              <col className="w-[17px]" />
              <col className="w-[17px]" />
              <col className="w-[17px]" />
              <col />
            </colgroup>
            <thead>
              <tr className="h-6">
                <th className="font-normal pl-1 border-r border-[#dde3ee]">Layer</th>
                <th className="font-normal pl-[5px] border-r border-[#dde3ee]">C...</th>
                <th className="border-r border-[#dde3ee]" />
                <th className="border-r border-[#dde3ee]" />
                <th className="border-r border-[#dde3ee]" />
                <th className="font-normal pl-px">M</th>
              </tr>
            </thead>
            <tbody>
              {LAYERS.map((l) => (
                <tr key={l.name} className={clsx("h-[18px] border-b border-[#edf0f5]", l.current && "bg-[#8299ed] font-bold text-[#16203a]")}>
                  <td className="pl-[7px] whitespace-nowrap leading-[16px]">{l.name}</td>
                  <td className="pl-[6px]">
                    {l.current && (
                      <svg viewBox="0 0 14 12" className="w-[14px] h-3">
                        <path d="M1 6l4 4 8-9" fill="none" stroke="#111" strokeWidth="1.800" />
                      </svg>
                    )}
                  </td>
                  <td>{!l.current && <Icon name="lightBulb" className="size-[14px] mx-auto" />}</td>
                  <td>{!l.current && <Icon name="unlock" className="size-[14px] mx-auto" />}</td>
                  <td>
                    <div className={clsx("size-3 mx-auto border", l.current ? "border-white" : "border-[#333]")} style={{ backgroundColor: l.color }} />
                  </td>
                  <td className="pl-[3px] overflow-hidden">{l.current && <div className="w-4 h-[15px] rounded-l-full bg-white" />}</td>
                </tr>
              ))}
            </tbody>
          </table>
        </div>
        <div className="h-[17px] bg-[#f0f0f0] flex items-center text-[#444] px-[2px]">
          <Chevron dir="left" />
          <div className="ml-[2px] w-[68px] h-[15px] bg-[#cdcdcd]" />
          <Chevron dir="right" className="ml-auto" />
        </div>
      </div>
    </section>
  );
}

/* ---------- rendering panel ---------- */

const PANEL_TABS: [string, string][] = [
  ["wheel", "w-[29px] border-b"],
  ["ballHand", "w-[31px] border-t border-x"],
  ["tube", "w-8 border-b"],
  ["open", "w-8 border-b"],
  ["helpWin", "w-8 border-b"],
  ["cog", "flex-1 border-b opacity-40"],
];

function RenderingPanel() {
  return (
    <section className="w-[181px] shrink-0 flex flex-col mb-1">
      <div className="flex items-center h-5 pl-[4px] gap-1">
        <h2>Rendering</h2>
        <div className="flex-1 h-[3px] border-y border-[#cdd5e3]" />
      </div>
      <div className="flex h-[21px]">
        {PANEL_TABS.map(([n, cls]) => (
          <button key={n} aria-label={n} className={clsx("h-[21px] grid place-items-center border-[#b5c2de]", cls)}>
            <Icon name={n} className="size-4" />
          </button>
        ))}
      </div>
      <div className="flex-1 flex border-x border-[#b5c2de]">
        <div className="w-[162px] flex flex-col overflow-hidden">
          <div className="flex h-5 justify-end pr-[7px] gap-[7px]">
            <label htmlFor="quality" className="leading-[16px]">Quality:</label>
            <div className="grid items-center w-[87px] h-5 border border-t-0 border-[#b5c2de]">
              <select id="quality" className="appearance-none col-start-1 row-start-1 pl-[3px] h-5 leading-[16px] pb-[3px] outline-none">
                <option>Draft quality</option>
              </select>
              <Chevron dir="down" className="col-start-1 row-start-1 justify-self-end mr-[2px] text-[#666] pointer-events-none" />
            </div>
          </div>
          <div className="h-[14px]" />
          <SectionHead title="Backdrop" />
          <div className="flex items-center justify-between pt-[5px] pr-3">
            <Radio label="Solid color" checked />
            <button aria-label="Backdrop color" className="w-4 h-6 bg-[#9f9f9f]" />
          </div>
          <Radio label="Gradient" />
          <Radio label="360° Environment" />
          <EnvPicker disabled />
          <Radio label="Wallpaper" />
          <Check label="Transparent backg..." className="h-[26px] mt-[14px] pl-[27px]" />
          <div className="flex items-center justify-between mt-2 pr-2">
            <Check label="Ground plane" checked className="h-[26px] pl-[27px]" />
            <button aria-label="Ground plane settings" className="w-5 h-[26px] border border-[#b5c2de] grid place-items-center">
              <Icon name="groundBtn" className="size-[18px]" />
            </button>
          </div>
          <Check label="Use custom enviro..." checked className="h-[26px] mt-[6px] pl-[27px]" />
          <div className="h-[3px]" />
          <EnvPicker />
          <div className="h-[14px]" />
          <SectionHead title="Lighting" />
          <div className="flex items-center justify-between mt-[6px] pr-2">
            <Check label="Sun" checked className="h-[26px] pl-[27px]" />
            <button aria-label="Sun settings" className="w-5 h-[26px] border border-[#b5c2de] grid place-items-center">
              <Icon name="sun" className="size-4" />
            </button>
          </div>
          <div className="flex items-center h-[26px] mt-3 pl-[27px]">
            <span className="w-[7px] overflow-hidden">
              <Check label="" checked />
            </span>
            <label htmlFor="intensity" className="w-[62px] pl-[10px]">Intensity:</label>
            <input id="intensity" defaultValue="1.0" className="w-[38px] h-[23px] pl-[5px] border border-[#b5c2de] bg-white outline-none" />
            <div className="w-3 h-[23px] border border-l-0 border-[#b5c2de] bg-white grid place-items-center">
              <svg viewBox="0 0 10 20" className="w-[10px] h-5">
                <path d="M2 7h6L5 4zM2 14h6l-3 3z" fill="#222" />
                <path d="M0 10.500h10" stroke="#b5c2de" />
              </svg>
            </div>
          </div>
          <Check label="Use custom en..." checked className="h-[26px] pl-[43px]" />
          <EnvPicker />
          <div className="flex h-[23px] mt-[7px] pl-[25px] items-stretch">
            <button className="w-[45px] border border-b-0 border-[#b5c2de] flex items-center gap-[5px] pl-[3px]">
              <Icon name="lamp" className="size-4" />
              Li...
            </button>
            <label htmlFor="skylight" className="self-center w-11 whitespace-nowrap">nt light:</label>
            <button id="skylight" aria-label="Ambient light" className="w-6 bg-black" />
            <button aria-label="More" className="w-4 border border-b-0 border-[#b5c2de] grid place-items-center text-[#666]">
              <Chevron dir="down" className="size-[10px]" />
            </button>
          </div>
        </div>
        <div className="w-[15px] bg-[#f0f0f0] flex flex-col items-center py-[3px] text-[#444]">
          <Chevron dir="up" />
          <div className="mt-[97px] w-[15px] h-[168px] bg-[#cdcdcd]" />
          <Chevron dir="down" className="mt-auto" />
        </div>
      </div>
      <div className="flex gap-1 h-[44px] items-center border border-[#b5c2de] pr-[4px]">
        <button className="w-[67px] h-[34px] border border-l-0 border-[#b5c2de] whitespace-nowrap text-left">o Defaults</button>
        <button className="flex-1 h-[34px] border border-[#b5c2de] flex items-center pl-[3px]">
          <Icon name="rendered" className="size-6" />
          <span className="flex-1 text-center pl-1">Render</span>
        </button>
      </div>
    </section>
  );
}

/* ---------- viewport ---------- */

const LARGE = [
  [812, 384], [836, 384], [860, 384], [883, 384], [907, 384], [930, 384], [953, 384],
  [776, 399], [800, 399], [824, 399], [848, 399], [871, 399], [895, 399], [918, 399], [942, 399], [966, 399], [989, 399],
  [764, 414], [788, 414], [812, 414], [836, 414], [860, 414], [883, 414], [907, 414], [930, 414], [954, 414], [979, 414], [1019, 415],
  [726, 429], [822, 429], [918, 429], [944, 429], [1048, 422], [712, 445], [932, 445], [1060, 438],
  [698, 462], [821, 461], [1074, 454], [706, 477], [808, 478], [833, 478], [933, 478], [1064, 470], [1089, 470],
  [1054, 487], [1079, 487], [1104, 487],
  [694, 494], [719, 494], [744, 494], [769, 494], [795, 494], [820, 494], [845, 494], [871, 494], [896, 494], [921, 494], [947, 494], [972, 495],
  [1018, 504], [1043, 504], [1068, 504], [1094, 504],
  [679, 511], [704, 511], [1114, 521], [689, 529], [1099, 539], [668, 548], [680, 566], [1118, 558], [680, 603], [1107, 605],
  [741, 650], [769, 650], [797, 650], [824, 650], [853, 650], [880, 650], [908, 650], [936, 650], [964, 650], [993, 650], [1020, 650], [1048, 650],
];

const SMALL = [
  [871, 373], [893, 373], [917, 374], [973, 385], [1009, 400], [998, 415], [743, 414], [746, 426], [802, 430], [843, 430],
  [821, 445], [718, 461], [923, 462], [941, 462], [685, 478], [727, 478], [911, 479], [954, 479], [672, 494], [996, 504], [1115, 504],
  [1092, 522], [667, 529], [1121, 540], [690, 548], [1096, 557], [1107, 572], [669, 584], [689, 584], [1099, 586], [1118, 586],
  [686, 623], [698, 637], [713, 649], [1102, 625], [1091, 638], [1076, 650],
];

const SILHOUETTE =
  "M868 355V343H823C762 353 705 377 660 417V427L684 438Q671 448 662 461L632 449Q611 475 602 502L589 570Q590 603 600 634L640 619L657 651L618 667Q626 686 647 707Q655 716 670 720H1120Q1137 720 1147 708Q1163 690 1171 671L1131 653L1148 622L1187 637Q1197 605 1198 577L1183 503Q1171 474 1152 451L1124 462Q1114 448 1103 438L1123 428V420C1075 377 1020 352 957 343H913V355Z";
const RING_OUT =
  "M893 354C790 356 715 392 680 439C652 472 636 515 640 558C643 605 663 646 693 669Q702 677 716 677H1076Q1092 677 1103 669C1130 648 1147 605 1148 555C1149 510 1132 466 1103 438C1058 386 985 354 893 354Z";
const RING_IN =
  "M893 362C800 364 722 402 690 450C662 485 650 520 654 556C658 600 680 640 704 656Q710 660 720 660H1066Q1078 660 1088 653C1112 637 1132 600 1135 556C1137 515 1118 478 1096 452C1050 398 975 362 893 362Z";
const WINDOW = "M709 537L735 519L960 520L992 530L1060 531L1078 542L1088 623L1067 640H721L700 620Z";
const WALL = "M705 530L734 505L960 506L993 517L1060 516L1080 530L1090 623L1068 641H720L698 621Z";

const HOLES = [
  { x: 769, y: 463, rx: 36, ry: 21 },
  { x: 875, y: 463, rx: 37, ry: 21 },
  { x: 1000, y: 464, rx: 46, ry: 28 },
];

function starPoints(x: number, y: number, rx: number, ry: number, depth: number) {
  const pts: string[] = [];
  for (let i = 0; i < 32; i++) {
    const a = (i / 32) * Math.PI * 2;
    const k = i % 2 ? 1 - depth : 1.04;
    pts.push(`${(x + Math.cos(a) * rx * k).toFixed(1)},${(y + Math.sin(a) * ry * k).toFixed(1)}`);
  }
  return pts.join(" ");
}

function DialModel() {
  return (
    <svg viewBox="449 208 830 632" className="w-full h-full" role="img" aria-label="Dial model in perspective view">
      <defs>
        <linearGradient id="plate" x1="0" x2="1">
          <stop offset="0" stopColor="#474f8a" />
          <stop offset=".45" stopColor="#333a72" />
          <stop offset="1" stopColor="#20275f" />
        </linearGradient>
      </defs>
      <path d={SILHOUETTE} fill="url(#plate)" stroke="#16228c" strokeWidth="2" strokeLinejoin="round" />
      <g fill="#19206a" stroke="#16228c">
        <path d="M660 417L690 431L684 438L661 428zM602 625L640 611V619L600 634zM1148 614L1188 629L1187 637L1147 623zM1123 420V428L1103 438L1099 431z" />
        <path d="M618 667Q626 680 647 700Q655 710 670 711H1120Q1137 711 1147 699Q1163 683 1171 671Q1163 690 1147 708Q1137 720 1120 720H670Q655 720 647 707Q626 686 618 667z" />
        <path d="M670 715H1120" />
      </g>
      <path d="M602 503H645M1142 506H1184M895 677V711M652 494H672M1130 497H1146" stroke="#16228c" fill="none" />
      <path d={RING_OUT} fill="url(#plate)" stroke="#16228c" strokeWidth="2" />
      <path d="M680 650Q698 670 716 670H1076Q1094 670 1110 652M706 673H1088" fill="none" stroke="#16228c" strokeWidth="2" />
      <path d={RING_IN} fill="#384074" stroke="#16228c" strokeWidth="3" />
      <path d="M893 366C800 368 728 404 694 452M893 366C975 366 1045 401 1092 454" fill="none" stroke="#19206a" strokeWidth="3" />

      {/* girdle dots round every stone seat */}
      <g fill="none" stroke="#1a2792" strokeWidth="5" strokeDasharray="5 2">
        {LARGE.map(([x, y]) => (
          <ellipse key={`${x}-${y}`} cx={x} cy={y + 1} rx="12" ry="7" />
        ))}
        {SMALL.map(([x, y]) => (
          <ellipse key={`${x}-${y}`} cx={x} cy={y + 1} rx="8" ry="5" />
        ))}
      </g>

      {HOLES.map((h) => (
        <g key={h.x}>
          <ellipse cx={h.x} cy={h.y - 7} rx={h.rx + 3} ry={h.ry + 7} fill="#1b2264" stroke="#16228c" strokeWidth="2" />
          <ellipse cx={h.x} cy={h.y - 4} rx={h.rx + 1} ry={h.ry + 4} fill="none" stroke="#16228c" />
          <ellipse cx={h.x} cy={h.y} rx={h.rx} ry={h.ry} fill="#9da3a9" stroke="#16228c" strokeWidth="1.500" />
        </g>
      ))}

      <path d={WALL} fill="#1b2264" stroke="#16228c" strokeWidth="2" />
      <path d="M706 535L735 513L960 514L992 524L1060 523L1078 536M848 505V520M976 511V525M1027 516V531" fill="none" stroke="#16228c" />
      <path d={WINDOW} fill="#9da3a9" stroke="#16228c" strokeWidth="2" />

      <g fill="#800808">
        {LARGE.map(([x, y]) => (
          <g key={`${x}-${y}`}>
            <polygon points={starPoints(x, y, 12, 7.5, 0.06)} />
            <ellipse cx={x} cy={y + 1} rx="7" ry="4" fill="none" stroke="#9c2b22" strokeWidth="0.800" strokeDasharray="1 2" />
          </g>
        ))}
      </g>
      <g fill="#d44d4d">
        {SMALL.map(([x, y]) => (
          <polygon key={`${x}-${y}`} points={starPoints(x, y, 8.5, 6, 0.14)} />
        ))}
      </g>

      <path d="M486.500 783v20.500H516" fill="none" stroke="#5b6067" />
      <text x="488" y="782" fontSize="14" fill="#4b5057">y</text>
      <text x="518" y="805" fontSize="14" fill="#4b5057">x</text>
    </svg>
  );
}

function Viewport() {
  return (
    <section className="flex-1 min-w-0 flex flex-col mr-[1px]">
      <div className="relative z-10 flex-1 bg-[#9da3a9] border-b border-[#7f868e]">
        <DialModel />
        <button className="absolute left-[1px] top-[1px] h-[18px] pl-2 pr-1 flex items-center gap-[6px] bg-[#8299ed] font-bold text-[#1b2748]">
          Perspectiva
          <svg viewBox="0 0 10 14" className="w-[10px] h-[14px]">
            <path d="M.500 0v14" stroke="#1b2748" />
            <path d="M2 5h7L5.500 9z" fill="#1b2748" />
          </svg>
        </button>
      </div>
      <div className="flex h-[22px] items-start">
        <button className="h-5 pl-[9px] pr-1 border border-t-0 border-[#b5c2de] rounded-b-md">Perspectiva</button>
        {["Top", "Frontal", "Izquierda"].map((v) => (
          <button key={v} className="h-5 pl-[9px] pr-1">{v}</button>
        ))}
        <button aria-label="Add viewport" className="h-[22px] pl-[10px] grid place-items-center">
          <svg viewBox="0 0 10 10" className="size-[10px]">
            <path d="M3.500.500h3v3h3v3h-3v3h-3v-3h-3v-3h3z" fill="#fff" stroke="#888" />
          </svg>
        </button>
      </div>
    </section>
  );
}

/* ---------- bottom bars ---------- */

const SNAPS: [string, boolean][] = [
  ["End", true], ["Near", true], ["Point", true], ["Mid", true], ["Cen", false], ["Int", true],
  ["Perp", true], ["Tan", false], ["Quad", true], ["Knot", false], ["Vertex", true],
];

function OsnapBar() {
  return (
    <div className="flex items-start gap-[6px] h-[37px] pl-[9px] pt-[7px]">
      {SNAPS.map(([s, on]) => (
        <Check key={s} label={s} checked={on} />
      ))}
      <Check label="Project" disabled />
      <Check label="Disable" disabled className="ml-2" />
    </div>
  );
}

const TOGGLES: [string, boolean, string][] = [
  ["Grid Snap", false, "w-[65px]"], ["Ortho", false, "w-[46px]"], ["Planar", true, "w-[47px]"], ["Osnap", true, "w-[47px]"],
  ["SmartTrack", true, "w-[75px]"], ["Gumball", true, "w-[58px]"], ["Record History", false, "w-[92px]"], ["Filter", false, "w-10"],
];

function StatusBar() {
  return (
    <div className="flex h-[21px] border-t border-[#b5c2de] text-center leading-[20px] whitespace-nowrap">
      <button className="w-[49px] border-r border-[#b5c2de]">CPlane</button>
      <span className="w-[88px] border-r border-[#b5c2de]">x 69.09</span>
      <span className="w-[88px] border-r border-[#b5c2de]">y 37.96</span>
      <span className="w-[88px] border-r border-[#b5c2de]">z</span>
      <button className="w-[88px] border-r border-[#b5c2de]">Millimeters</button>
      <button className="flex-[168] flex items-center gap-[2px] pl-1 border-r border-[#b5c2de]">
        <span className="size-[14px] bg-[#16208a] border border-[#333]" />
        finished part
      </button>
      {TOGGLES.map(([t, on, w]) => (
        <button key={t} className={clsx("border-r border-[#cdd5e3]", w, on && "bg-[#d0d8ee] font-bold")}>
          {t}
        </button>
      ))}
      <span className="flex-[233] text-left pl-[2px] mr-2 border-r border-[#b5c2de]">Selected object count:</span>
    </div>
  );
}

function OfficeTile({ letter, back, front, round }: { letter: string; back: string; front: string; round?: boolean }) {
  return (
    <svg viewBox="0 0 26 26" className="size-[26px]">
      {round ? <circle cx="15" cy="13" r="11" fill={back} /> : <rect x="6" y="2" width="19" height="22" rx="1" fill={back} />}
      <path d={round ? "M15 2a11 11 0 0 1 11 11H15z" : "M15 2h10v11H15z"} fill="#fff" opacity=".25" />
      <rect x="1" y="7" width="13" height="13" rx="1" fill={front} />
      <text x="7.500" y="18" fontSize="12" fontWeight="700" fill="#fff" textAnchor="middle">{letter}</text>
    </svg>
  );
}

function AdobeTile({ label, color }: { label: string; color: "orange" | "cyan" }) {
  return (
    <span
      className={clsx(
        "size-[22px] border-2 text-[13px] leading-[18px] font-bold text-center",
        color === "orange" ? "border-[#f57c1c] text-[#f57c1c] bg-[#261304]" : "border-[#2cc0e8] text-[#2cc0e8] bg-[#062434]",
      )}
    >
      {label}
    </span>
  );
}

const APPS: { label: string; node: ReactNode; open?: boolean; active?: boolean }[] = [
  { label: "Task view", node: <Icon name="taskView" className="size-5" /> },
  { label: "Illustrator", node: <AdobeTile label="Ai" color="orange" /> },
  { label: "Excel", node: <OfficeTile letter="X" back="#21a366" front="#107c41" /> },
  { label: "PowerPoint", node: <OfficeTile letter="P" back="#ed6c47" front="#c43e1c" round /> },
  { label: "Word", node: <OfficeTile letter="W" back="#2b7cd3" front="#185abd" /> },
  { label: "Explorer", node: <Icon name="folder" className="size-[22px]" />, open: true },
  { label: "Photoshop", node: <AdobeTile label="Ps" color="cyan" />, open: true },
  { label: "Calculator", node: <Icon name="calc" /> },
  { label: "Rhinoceros", node: <Icon name="rhino" />, open: true, active: true },
];

function Taskbar() {
  return (
    <footer className="flex h-10 bg-[#03070f] text-white">
      <button aria-label="Start" className="w-12 grid place-items-center">
        <Icon name="start" className="size-5" />
      </button>
      <label className="w-[344px] flex items-center bg-[#f2f2f2] pl-[10px] pr-[11px]">
        <span className="size-[21px] rounded-full border-[3px] border-[#111]" />
        <input aria-label="Search" placeholder="Escribe aquí para buscar" className="flex-1 min-w-0 pl-[9px] text-[15px] text-black placeholder:text-[#333] outline-none" />
        <Icon name="mic" className="size-[18px]" />
      </label>
      {APPS.map((a) => (
        <button key={a.label} aria-label={a.label} className={clsx("w-[49px] flex flex-col items-center pt-[1px]", a.active && "bg-[#3a3e42]")}>
          <span className="flex-1 grid place-items-center">{a.node}</span>
          <span className={clsx("h-[2px]", a.active ? "w-[49px]" : "w-10", a.open && "bg-[#76b9ed]")} />
        </button>
      ))}
      <div className="ml-auto flex items-center">
        <Icon name="people" className="size-[18px] mr-[20px]" />
        <Chevron dir="up" className="mr-[11px]" />
        <Icon name="update" className="size-[18px] mr-[6px]" />
        <Icon name="eset" className="size-[18px] mr-[6px]" />
        <Icon name="netErr" className="size-[18px] mr-[6px]" />
        <Icon name="volume" className="size-[17px] mr-[12px]" />
        <span className="w-[31px]">ESP</span>
        <div className="w-[62px] text-center leading-[17px] whitespace-nowrap">
          <p>12:13 a. m.</p>
          <p>10/07/2024</p>
        </div>
        <button aria-label="Notifications" className="w-[58px] grid place-items-center">
          <svg viewBox="0 0 26 26" className="size-[26px]">
            <path d="M2 3h17v13h-8l-4 4v-4H2z" fill="#fff" />
            <path d="M5 6.500h11M5 9.500h11M5 12.500h7" stroke="#03070f" />
            <circle cx="18" cy="17" r="7.500" fill="#333" stroke="#999" />
            <text x="18" y="21" fontSize="11" fill="#fff" textAnchor="middle">5</text>
          </svg>
        </button>
      </div>
    </footer>
  );
}

function Gradients() {
  return (
    <svg className="absolute w-0 h-0" aria-hidden="true">
      <defs>
        <linearGradient id="blue" x1="0" y1="0" x2="1" y2="1">
          <stop offset="0" stopColor="#b4c4ff" />
          <stop offset="1" stopColor="#4a65d6" />
        </linearGradient>
        <linearGradient id="paper" x1="0" y1="0" x2="1" y2="1">
          <stop offset="0" stopColor="#fff" />
          <stop offset="1" stopColor="#dcdcdc" />
        </linearGradient>
        <linearGradient id="gold" x1="0" y1="0" x2="0" y2="1">
          <stop offset="0" stopColor="#ffe98a" />
          <stop offset="1" stopColor="#f0b429" />
        </linearGradient>
        <linearGradient id="yellow" x1="0" y1="0" x2="1" y2="1">
          <stop offset="0" stopColor="#fdf9c0" />
          <stop offset="1" stopColor="#ecd95a" />
        </linearGradient>
        <linearGradient id="orange" x1="0" y1="0" x2="1" y2="1">
          <stop offset="0" stopColor="#ffd25a" />
          <stop offset="1" stopColor="#f08a12" />
        </linearGradient>
        <radialGradient id="steel" cx=".35" cy=".3" r=".8">
          <stop offset="0" stopColor="#fff" />
          <stop offset="1" stopColor="#555" />
        </radialGradient>
        <radialGradient id="ball" cx=".35" cy=".3" r=".75">
          <stop offset="0" stopColor="#dfe8ff" />
          <stop offset=".4" stopColor="#2c5ad6" />
          <stop offset="1" stopColor="#091a6b" />
        </radialGradient>
      </defs>
    </svg>
  );
}

export default function App() {
  return (
    <div className="relative min-h-screen flex flex-col bg-[#e9ecf0] text-[12px] leading-[16px] text-[#222] font-[Roboto,'Open_Sans',sans-serif] overflow-hidden">
      <Gradients />
      <TitleBar />
      <CommandArea />
      <TopToolbars />
      <main className="flex-1 flex pt-[7px]">
        <LayersPanel />
        <RenderingPanel />
        <aside className="w-[60px] ml-1 mr-[3px] shrink-0 border-l border-[#cdd5e3]">
          <div className="h-[3px] mb-[5px] mx-1 border-y border-[#cdd5e3]" />
          <div className="grid grid-cols-[28px_28px]">
            {SIDE_TOOLS.map((t) => (
              <ToolButton key={t} name={t} />
            ))}
          </div>
        </aside>
        <Viewport />
      </main>
      <OsnapBar />
      <StatusBar />
      <Taskbar />
      <div className="absolute right-[50px] bottom-[84px] text-[#b4b8bd] pointer-events-none">
        <p className="text-[20px] leading-[26px]">Activar Windows</p>
        <p className="text-[15px] leading-[18px]">Ve a Configuración para activar Windows.</p>
      </div>
    </div>
  );
}
